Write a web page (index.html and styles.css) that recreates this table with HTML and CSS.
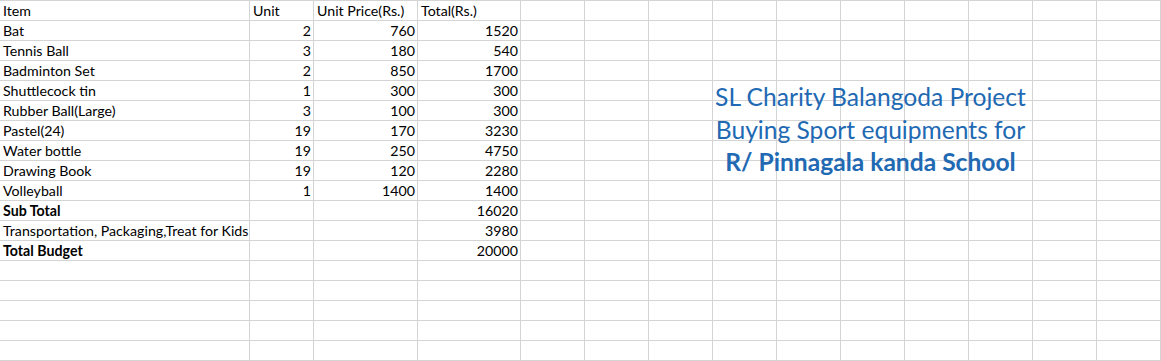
FILE: index.html
```html
<!DOCTYPE html>
<html>
<head>
<meta charset="utf-8">
<link rel="stylesheet" href="styles.css">
</head>
<body>
<div class="sheet">
  <div class="row"><div class="c">Item</div><div class="c">Unit</div><div class="c">Unit Price(Rs.)</div><div class="c">Total(Rs.)</div><div></div><div></div><div></div><div></div><div></div><div></div><div></div><div></div><div></div><div></div></div>
  <div class="row"><div class="c">Bat</div><div class="c n">2</div><div class="c n">760</div><div class="c n">1520</div><div></div><div></div><div></div><div></div><div></div><div></div><div></div><div></div><div></div><div></div></div>
  <div class="row"><div class="c">Tennis Ball</div><div class="c n">3</div><div class="c n">180</div><div class="c n">540</div><div></div><div></div><div></div><div></div><div></div><div></div><div></div><div></div><div></div><div></div></div>
  <div class="row"><div class="c">Badminton Set</div><div class="c n">2</div><div class="c n">850</div><div class="c n">1700</div><div></div><div></div><div></div><div></div><div></div><div></div><div></div><div></div><div></div><div></div></div>
  <div class="row"><div class="c">Shuttlecock tin</div><div class="c n">1</div><div class="c n">300</div><div class="c n">300</div><div></div><div></div><div></div><div></div><div></div><div></div><div></div><div></div><div></div><div></div></div>
  <div class="row"><div class="c">Rubber Ball(Large)</div><div class="c n">3</div><div class="c n">100</div><div class="c n">300</div><div></div><div></div><div></div><div></div><div></div><div></div><div></div><div></div><div></div><div></div></div>
  <div class="row"><div class="c">Pastel(24)</div><div class="c n">19</div><div class="c n">170</div><div class="c n">3230</div><div></div><div></div><div></div><div></div><div></div><div></div><div></div><div></div><div></div><div></div></div>
  <div class="row"><div class="c">Water bottle</div><div class="c n">19</div><div class="c n">250</div><div class="c n">4750</div><div></div><div></div><div></div><div></div><div></div><div></div><div></div><div></div><div></div><div></div></div>
  <div class="row"><div class="c">Drawing Book</div><div class="c n">19</div><div class="c n">120</div><div class="c n">2280</div><div></div><div></div><div></div><div></div><div></div><div></div><div></div><div></div><div></div><div></div></div>
  <div class="row"><div class="c">Volleyball</div><div class="c n">1</div><div class="c n">1400</div><div class="c n">1400</div><div></div><div></div><div></div><div></div><div></div><div></div><div></div><div></div><div></div><div></div></div>
  <div class="row"><div class="c b">Sub Total</div><div></div><div></div><div class="c n">16020</div><div></div><div></div><div></div><div></div><div></div><div></div><div></div><div></div><div></div><div></div></div>
  <div class="row"><div class="c">Transportation, Packaging,Treat for Kids</div><div></div><div></div><div class="c n">3980</div><div></div><div></div><div></div><div></div><div></div><div></div><div></div><div></div><div></div><div></div></div>
  <div class="row"><div class="c b">Total Budget</div><div></div><div></div><div class="c n">20000</div><div></div><div></div><div></div><div></div><div></div><div></div><div></div><div></div><div></div><div></div></div>
  <div class="row"><div></div><div></div><div></div><div></div><div></div><div></div><div></div><div></div><div></div><div></div><div></div><div></div><div></div><div></div></div>
  <div class="row"><div></div><div></div><div></div><div></div><div></div><div></div><div></div><div></div><div></div><div></div><div></div><div></div><div></div><div></div></div>
  <div class="row"><div></div><div></div><div></div><div></div><div></div><div></div><div></div><div></div><div></div><div></div><div></div><div></div><div></div><div></div></div>
  <div class="row"><div></div><div></div><div></div><div></div><div></div><div></div><div></div><div></div><div></div><div></div><div></div><div></div><div></div><div></div></div>
  <div class="row"><div></div><div></div><div></div><div></div><div></div><div></div><div></div><div></div><div></div><div></div><div></div><div></div><div></div><div></div></div>
  <div class="title">
    <div>SL Charity Balangoda Project</div>
    <div>Buying Sport equipments for</div>
    <div class="title-b">R/ Pinnagala kanda School</div>
  </div>
</div>
</body>
</html>
```
FILE: styles.css
```css
html, body {
  margin: 0;
  padding: 0;
  background: #ffffff;
}
.sheet {
  position: relative;
  width: 1161px;
  height: 361px;
  display: flex;
  flex-direction: column;
  gap: 1px;
  padding: 1px 0;
  box-sizing: border-box;
  background: #d4d4d4;
  font-family: Lato, "Liberation Sans", sans-serif;
  font-size: 14.2px;
  color: #000;
  overflow: hidden;
}
.row {
  display: grid;
  grid-template-columns: 249px 63px 103px 102px repeat(9, 63px) 63px;
  column-gap: 1px;
  height: 19px;
  flex: 0 0 19px;
}
.row > div {
  background: #fff;
  min-width: 0;
}
.c {
  line-height: 19px;
  padding: 0 2px 0 3px;
  white-space: nowrap;
  overflow: visible;
}
.n {
  text-align: right;
}
.b {
  font-weight: 700;
}
.title {
  position: absolute;
  left: 670px;
  top: 81px;
  width: 401px;
  text-align: center;
  color: #2169b3;
  font-size: 24.6px;
  line-height: 32.5px;
}
.title-b {
  font-weight: 700;
}
```
